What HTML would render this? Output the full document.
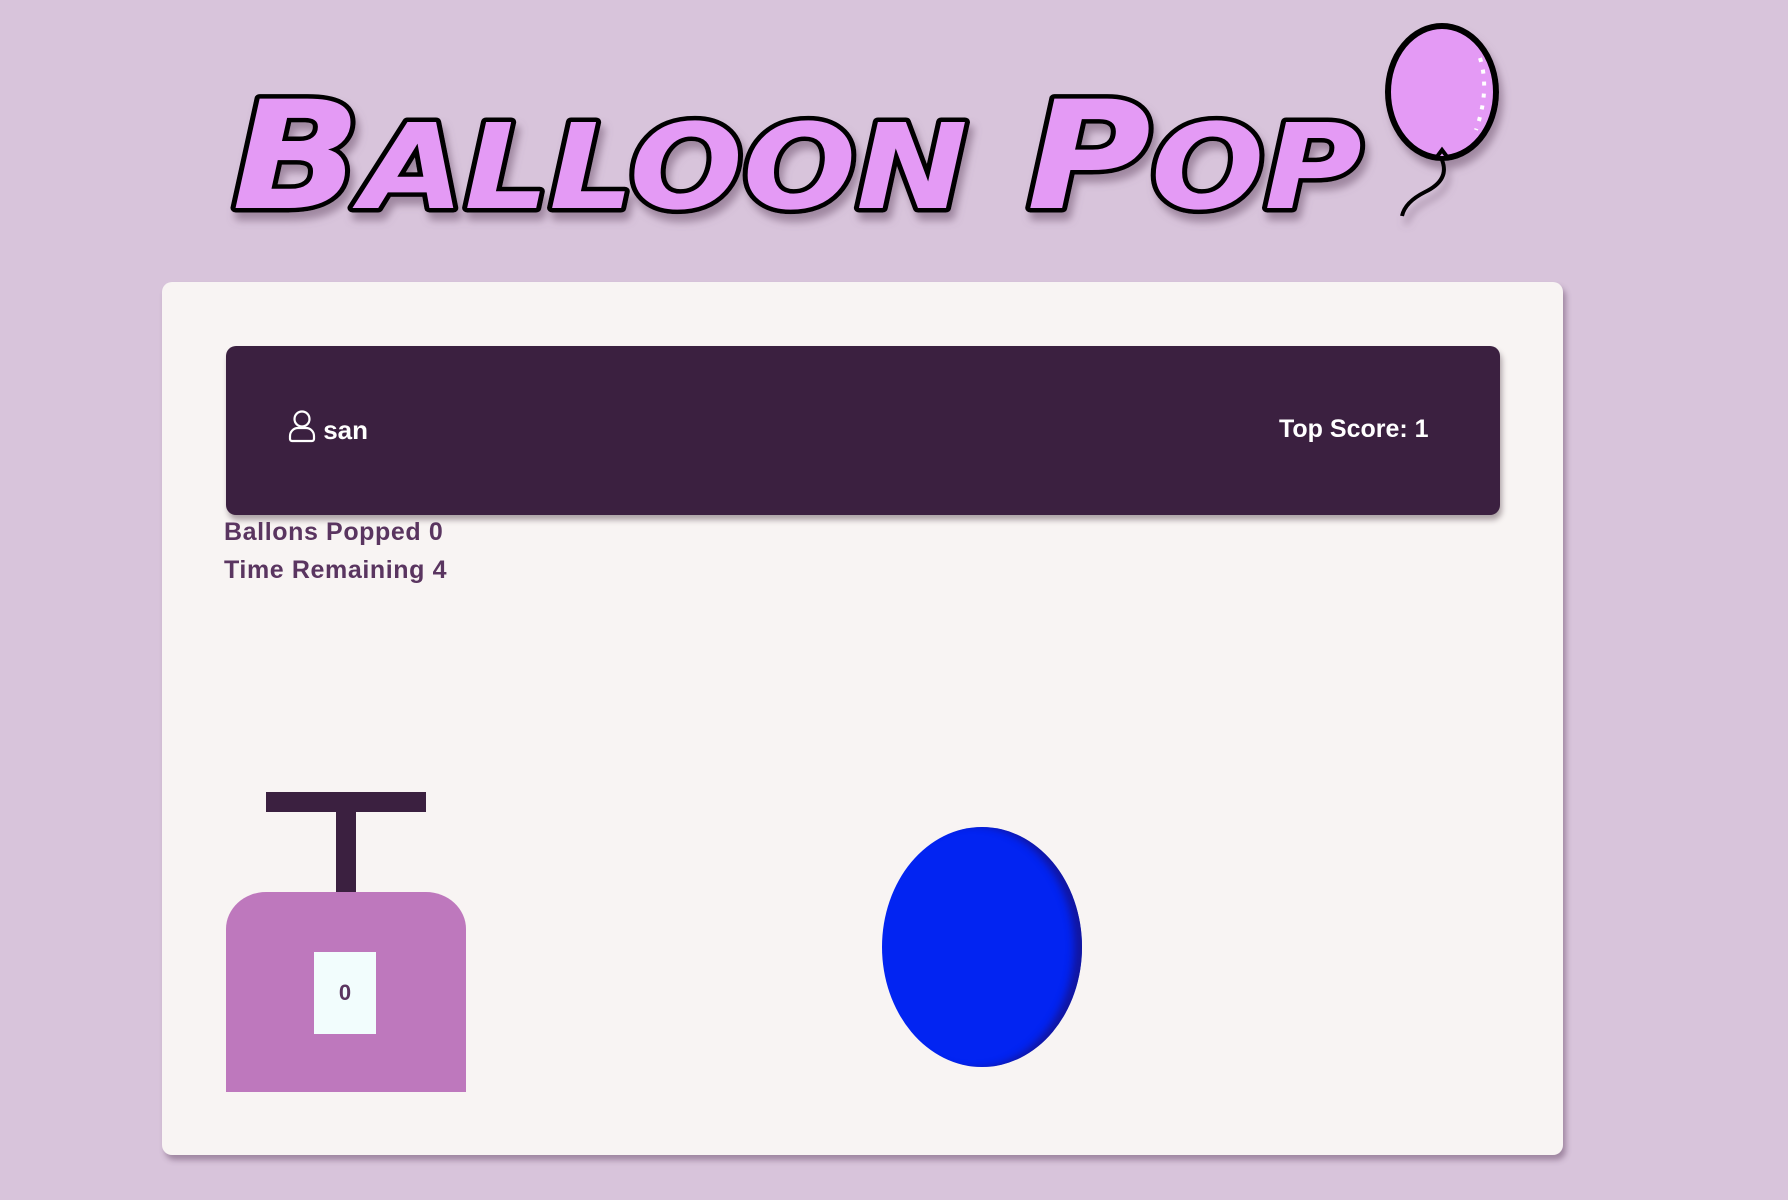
<!DOCTYPE html>
<html><head><meta charset="utf-8"><style>
html,body{margin:0;padding:0}
body{width:1788px;height:1200px;background:#d8c4db;position:relative;overflow:hidden;font-family:"Liberation Sans",sans-serif}
.card{position:absolute;left:162px;top:282px;width:1401px;height:873px;background:#f8f4f3;border-radius:10px;box-shadow:3px 5px 6px rgba(90,60,90,.45)}
.bar{position:absolute;left:226px;top:346px;width:1274px;height:169px;background:#3b2040;border-radius:10px;box-shadow:2px 5px 6px rgba(60,40,50,.4)}
.user{position:absolute;left:288px;top:409px;color:#fff;font-size:26px;font-weight:bold}
.top{position:absolute;left:1279px;top:415px;color:#fff;font-size:25px;font-weight:bold}
.stats{position:absolute;left:224px;top:513px;color:#5a3560;font-size:25px;font-weight:bold;line-height:38px;letter-spacing:0.6px}
.tbar{position:absolute;left:266px;top:792px;width:160px;height:20px;background:#3b2040}
.stem{position:absolute;left:336px;top:811px;width:20px;height:82px;background:#3b2040}
.box{position:absolute;left:226px;top:892px;width:240px;height:200px;background:#be78bd;border-radius:40px 40px 0 0/37px 37px 0 0}
.win{position:absolute;left:314px;top:952px;width:62px;height:82px;background:#f2fdfd;color:#5a3560;font-size:22px;font-weight:bold;text-align:center;line-height:82px}
.balloon{position:absolute;left:882px;top:827px;width:200px;height:240px;border-radius:50%;background:#0224f2;box-shadow:inset -10px 0 8px -2px rgba(20,20,150,.9)}
</style></head><body>
<svg style="position:absolute;left:0;top:0" width="1788" height="260">
<defs><filter id="sh"><feDropShadow dx="4" dy="8" stdDeviation="4" flood-color="#7a607a" flood-opacity=".6"/></filter></defs>
<g filter="url(#sh)">
<text x="232" y="208" textLength="1130" lengthAdjust="spacingAndGlyphs" font-family="DejaVu Sans" font-weight="bold" font-style="italic" font-size="150" fill="#e49af5" stroke="#000" stroke-width="9" paint-order="stroke" stroke-linejoin="round">B<tspan font-size="118">ALLOON</tspan> P<tspan font-size="118">OP</tspan></text>
<ellipse cx="1442" cy="92" rx="54" ry="66" fill="#e49af5" stroke="#000" stroke-width="6"/>
<path d="M1480 58 Q1490 90 1476 130" stroke="#fff" stroke-width="4" stroke-dasharray="4 8" fill="none"/>
<path d="M1436 158 L1448 158 L1442 150 Z" fill="#e49af5" stroke="#000" stroke-width="4"/>
<path d="M1442 160 Q1450 180 1425 192 Q1405 202 1402 216" stroke="#000" stroke-width="4" fill="none"/>
</g></svg>
<div class="card"></div>
<div class="bar"></div>
<div class="user"><svg width="28" height="34" viewBox="0 0 28 34" style="vertical-align:-4px"><circle cx="14" cy="10" r="7.5" fill="none" stroke="#fff" stroke-width="2.2"/><path d="M4 32 h20 a2 2 0 0 0 2-2 v-3 a8 8 0 0 0-8-8 h-8 a8 8 0 0 0-8 8 v3 a2 2 0 0 0 2 2z" fill="none" stroke="#fff" stroke-width="2.2"/></svg> san</div>
<div class="top">Top Score: 1</div>
<div class="stats">Ballons Popped 0<br>Time Remaining 4</div>
<div class="tbar"></div><div class="stem"></div>
<div class="box"></div><div class="win">0</div>
<div class="balloon"></div>
</body></html>
